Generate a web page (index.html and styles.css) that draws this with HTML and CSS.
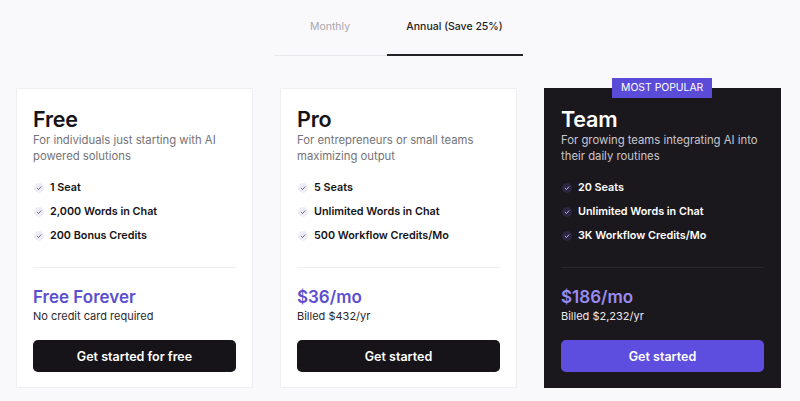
FILE: index.html
```html
<!DOCTYPE html>
<html>
<head>
	<meta name="viewport" content="width=device-width, initial-scale=1">
	<title>Pricing</title>
	<link rel="stylesheet" href="styles.css">
</head>
<body>
	<div class="tabs">
		<div class="tab">Monthly</div>
		<div class="tab active">Annual (Save 25%)</div>
	</div>

	<div class="plans">
		<div class="card">
			<h2>Free</h2>
			<p class="desc">For individuals just starting with AI powered solutions</p>
			<ul class="features">
				<li><span class="check"><svg viewBox="0 0 10 10"><path d="M3.2 5.3 L4.5 6.5 L6.9 3.8"/></svg></span>1 Seat</li>
				<li><span class="check"><svg viewBox="0 0 10 10"><path d="M3.2 5.3 L4.5 6.5 L6.9 3.8"/></svg></span>2,000 Words in Chat</li>
				<li><span class="check"><svg viewBox="0 0 10 10"><path d="M3.2 5.3 L4.5 6.5 L6.9 3.8"/></svg></span>200 Bonus Credits</li>
			</ul>
			<hr>
			<div class="price">Free Forever</div>
			<div class="billed">No credit card required</div>
			<button>Get started for free</button>
		</div>

		<div class="card">
			<h2>Pro</h2>
			<p class="desc">For entrepreneurs or small teams maximizing output</p>
			<ul class="features">
				<li><span class="check"><svg viewBox="0 0 10 10"><path d="M3.2 5.3 L4.5 6.5 L6.9 3.8"/></svg></span>5 Seats</li>
				<li><span class="check"><svg viewBox="0 0 10 10"><path d="M3.2 5.3 L4.5 6.5 L6.9 3.8"/></svg></span>Unlimited Words in Chat</li>
				<li><span class="check"><svg viewBox="0 0 10 10"><path d="M3.2 5.3 L4.5 6.5 L6.9 3.8"/></svg></span>500 Workflow Credits/Mo</li>
			</ul>
			<hr>
			<div class="price">$36/mo</div>
			<div class="billed">Billed $432/yr</div>
			<button>Get started</button>
		</div>

		<div class="card dark">
			<span class="badge">MOST POPULAR</span>
			<h2>Team</h2>
			<p class="desc">For growing teams integrating AI into their daily routines</p>
			<ul class="features">
				<li><span class="check"><svg viewBox="0 0 10 10"><path d="M3.2 5.3 L4.5 6.5 L6.9 3.8"/></svg></span>20 Seats</li>
				<li><span class="check"><svg viewBox="0 0 10 10"><path d="M3.2 5.3 L4.5 6.5 L6.9 3.8"/></svg></span>Unlimited Words in Chat</li>
				<li><span class="check"><svg viewBox="0 0 10 10"><path d="M3.2 5.3 L4.5 6.5 L6.9 3.8"/></svg></span>3K Workflow Credits/Mo</li>
			</ul>
			<hr>
			<div class="price">$186/mo</div>
			<div class="billed">Billed $2,232/yr</div>
			<button>Get started</button>
		</div>
	</div>
</body>
</html>
```

FILE: styles.css
```css
body {
	font-family: Inter, "Noto Sans", sans-serif;
	background-color: #f9f8fb;
	color: #151317;
	margin: 0;
	padding: 0;
}
.tabs {
	display: flex;
	justify-content: center;
	padding-top: 18px;
	margin-left: -4px;
}
.tab {
	font-size: 10.5px;
	color: #a9a7ad;
	padding: 0 0 19px;
	border-bottom: 1px solid #ebe9ee;
	width: 113px;
	text-align: center;
	line-height: 18px;
}
.tab.active {
	color: #1f1d22;
	font-weight: 500;
	width: 136px;
	border-bottom: 2px solid #242226;
	padding-bottom: 18px;
}
.plans {
	display: flex;
	gap: 27px;
	padding: 32px 0 0 16px;
}
.card {
	position: relative;
	width: 237px;
	box-sizing: border-box;
	background-color: #fff;
	border: 1px solid #f0eef3;
	padding: 17px 16px 15px;
	height: 300px;
}
.card h2 {
	font-size: 21.5px;
	font-weight: 600;
	margin: 0;
	line-height: 26px;
	letter-spacing: -0.2px;
}
.desc {
	font-size: 11.3px;
	color: #747277;
	line-height: 16px;
	margin: 0;
}
.features {
	list-style: none;
	padding: 0;
	margin: 16px 0 0;
}
.features li {
	display: flex;
	align-items: center;
	font-size: 10.8px;
	font-weight: 600;
	line-height: 16px;
	margin-bottom: 8px;
}
.check {
	width: 10px;
	height: 10px;
	border-radius: 50%;
	background-color: #efedf5;
	margin: 0 6px 0 1px;
	display: flex;
}
.check svg {
	width: 10px;
	height: 10px;
	fill: none;
	stroke: #6e6a80;
	stroke-width: 1;
	stroke-linecap: round;
}
hr {
	border: none;
	border-top: 1px solid #efedf1;
	margin: 23px 0 0;
}
.price {
	font-size: 17px;
	font-weight: 600;
	color: #5c4fcf;
	margin-top: 18px;
	line-height: 22px;
}
.billed {
	font-size: 11px;
	line-height: 16px;
	color: #2a282c;
}
button {
	display: block;
	width: 100%;
	height: 32px;
	margin-top: 16px;
	background-color: #161418;
	color: #fff;
	border: none;
	border-radius: 5px;
	font-family: inherit;
	font-size: 12.5px;
	font-weight: 600;
	cursor: pointer;
}
.card.dark {
	background-color: #1b181d;
	border-color: #1b181d;
	color: #fff;
}
.dark .desc {
	color: #c9c6cd;
}
.dark .check {
	background-color: #2c2741;
}
.dark .check svg {
	stroke: #b8b0f0;
}
.dark hr {
	border-top-color: #29262b;
}
.dark .price {
	color: #9a8cf2;
}
.dark .billed {
	color: #eceaee;
}
.dark button {
	background-color: #5e4ee0;
}
.badge {
	position: absolute;
	top: -11px;
	left: 67px;
	background-color: #5a4bd9;
	color: #fff;
	font-size: 10.4px;
	line-height: 20px;
	padding: 0 9px;
}
```
